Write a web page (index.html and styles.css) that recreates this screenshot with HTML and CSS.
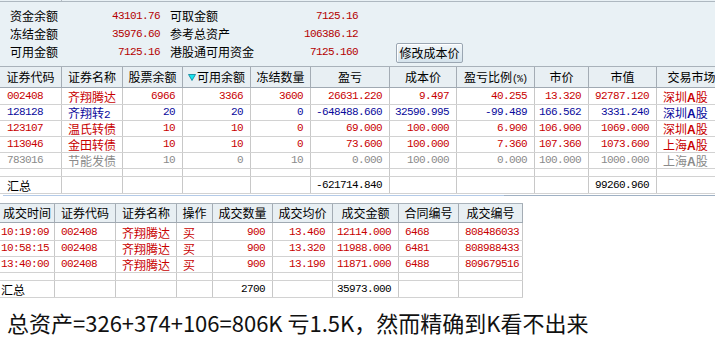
FILE: index.html
```html
<!DOCTYPE html>
<html lang="zh-CN">
<head>
<meta charset="utf-8">
<title>资金股份</title>
<link rel="stylesheet" href="styles.css">
</head>
<body>
<div class="app">
  <div class="topline"><span class="tick"></span></div>
  <div class="panel">
    <div class="pgrid">
      <span class="lbl">资金余额</span><span class="val">43101.76</span>
      <span class="lbl l2">可取金额</span><span class="val">7125.16</span>
      <span></span><span></span>
      <span class="lbl">冻结金额</span><span class="val">35976.60</span>
      <span class="lbl l2">参考总资产</span><span class="val">106386.12</span>
      <span></span><span></span>
      <span class="lbl">可用金额</span><span class="val">7125.16</span>
      <span class="lbl l2">港股通可用资金</span><span class="val">7125.160</span>
      <span></span><button class="btn" type="button">修改成本价</button>
    </div>
  </div>

  <div class="grid g1">
    <div class="row head">
      <div class="c">证券代码</div><div class="c">证券名称</div><div class="c">股票余额</div>
      <div class="c"><svg class="sort" width="8" height="7" viewBox="0 0 8 7"><polygon points="0.5,0.5 7.5,0.5 4,6.5" fill="#1ae6f0" stroke="#0a7f95" stroke-width="0.8"/></svg>可用余额</div>
      <div class="c">冻结数量</div><div class="c">盈亏</div><div class="c">成本价</div>
      <div class="c">盈亏比例<span class="pct">(%)</span></div><div class="c">市价</div><div class="c">市值</div><div class="c">交易市场</div>
    </div>
    <div class="row first red">
      <div class="c n l">002408</div><div class="c l">齐翔腾达</div><div class="c n r">6966</div><div class="c n r">3366</div><div class="c n r">3600</div><div class="c n r">26631.220</div><div class="c n r">9.497</div><div class="c n r">40.255</div><div class="c n r">13.320</div><div class="c n r">92787.120</div><div class="c l">深圳<b class="a">A</b>股</div>
    </div>
    <div class="row blue">
      <div class="c n l">128128</div><div class="c l">齐翔转<span class="n">2</span></div><div class="c n r">20</div><div class="c n r">20</div><div class="c n r">0</div><div class="c n r">-648488.660</div><div class="c n r">32590.995</div><div class="c n r">-99.489</div><div class="c n r">166.562</div><div class="c n r">3331.240</div><div class="c l">深圳<b class="a">A</b>股</div>
    </div>
    <div class="row red">
      <div class="c n l">123107</div><div class="c l">温氏转债</div><div class="c n r">10</div><div class="c n r">10</div><div class="c n r">0</div><div class="c n r">69.000</div><div class="c n r">100.000</div><div class="c n r">6.900</div><div class="c n r">106.900</div><div class="c n r">1069.000</div><div class="c l">深圳<b class="a">A</b>股</div>
    </div>
    <div class="row red">
      <div class="c n l">113046</div><div class="c l">金田转债</div><div class="c n r">10</div><div class="c n r">10</div><div class="c n r">0</div><div class="c n r">73.600</div><div class="c n r">100.000</div><div class="c n r">7.360</div><div class="c n r">107.360</div><div class="c n r">1073.600</div><div class="c l">上海<b class="a">A</b>股</div>
    </div>
    <div class="row gray">
      <div class="c n l">783016</div><div class="c l">节能发债</div><div class="c n r">10</div><div class="c n r">0</div><div class="c n r">10</div><div class="c n r">0.000</div><div class="c n r">100.000</div><div class="c n r">0.000</div><div class="c n r">100.000</div><div class="c n r">1000.000</div><div class="c l">上海<b class="a">A</b>股</div>
    </div>
    <div class="row empty">
      <div class="c"></div><div class="c"></div><div class="c"></div><div class="c"></div><div class="c"></div><div class="c"></div><div class="c"></div><div class="c"></div><div class="c"></div><div class="c"></div><div class="c"></div>
    </div>
    <div class="row sum">
      <div class="c l">汇总</div><div class="c"></div><div class="c"></div><div class="c"></div><div class="c"></div><div class="c n r">-621714.840</div><div class="c"></div><div class="c"></div><div class="c"></div><div class="c n r">99260.960</div><div class="c"></div>
    </div>
  </div>

  <div class="split"><span class="sp-a"></span><span class="sp-b"></span></div>

  <div class="grid g2">
    <div class="row head">
      <div class="c">成交时间</div><div class="c">证券代码</div><div class="c">证券名称</div><div class="c">操作</div><div class="c">成交数量</div><div class="c">成交均价</div><div class="c">成交金额</div><div class="c">合同编号</div><div class="c">成交编号</div>
    </div>
    <div class="row first red">
      <div class="c n t">10:19:09</div><div class="c n l">002408</div><div class="c l">齐翔腾达</div><div class="c l">买</div><div class="c n r">900</div><div class="c n r">13.460</div><div class="c n r">12114.000</div><div class="c n l">6468</div><div class="c n l">808486033</div>
    </div>
    <div class="row red">
      <div class="c n t">10:58:15</div><div class="c n l">002408</div><div class="c l">齐翔腾达</div><div class="c l">买</div><div class="c n r">900</div><div class="c n r">13.320</div><div class="c n r">11988.000</div><div class="c n l">6481</div><div class="c n l">808988433</div>
    </div>
    <div class="row red">
      <div class="c n t">13:40:00</div><div class="c n l">002408</div><div class="c l">齐翔腾达</div><div class="c l">买</div><div class="c n r">900</div><div class="c n r">13.190</div><div class="c n r">11871.000</div><div class="c n l">6488</div><div class="c n l">809679516</div>
    </div>
    <div class="row empty">
      <div class="c"></div><div class="c"></div><div class="c"></div><div class="c"></div><div class="c"></div><div class="c"></div><div class="c"></div><div class="c"></div><div class="c"></div>
    </div>
    <div class="row sum">
      <div class="c t">汇总</div><div class="c"></div><div class="c"></div><div class="c"></div><div class="c n r">2700</div><div class="c"></div><div class="c n r">35973.000</div><div class="c"></div><div class="c"></div>
    </div>
  </div>

  <p class="note">总资产=326+374+106=806K 亏1.5K，然而精确到K看不出来</p>
</div>
</body>
</html>
```
FILE: styles.css
```css
html, body {
  margin: 0;
  padding: 0;
  background: #ffffff;
}
body {
  width: 715px;
  height: 359px;
  overflow: hidden;
  font-family: "Noto Sans CJK SC", "Noto Sans", sans-serif;
  font-size: 12px;
  color: #000;
}
.app {
  width: 715px;
  overflow: hidden;
}

/* top strip */
.topline {
  height: 1px;
  background: #e9f1f5;
  display: flex;
}
.tick {
  width: 62px;
  box-sizing: border-box;
  border-right: 1px solid #b4bcc4;
}

/* account panel */
.panel {
  height: 65px;
  box-sizing: border-box;
  border-top: 1px solid #aeb8c0;
  background: #e9f1f5;
  padding: 5px 0 0 10px;
}
.pgrid {
  display: grid;
  grid-template-columns: 70px 80px 98px 100px 38px 67px;
  grid-auto-rows: 18px;
  align-items: center;
}
.lbl {
  line-height: 18px;
  white-space: nowrap;
}
.l2 {
  padding-left: 10px;
}
.val {
  text-align: right;
  font-family: "Liberation Mono", "DejaVu Sans Mono", monospace;
  font-size: 11px;
  letter-spacing: -0.6px;
  color: #b40000;
  line-height: 18px;
}
.btn {
  align-self: start;
  width: 67px;
  height: 20px;
  padding: 0;
  margin: 0;
  font-family: "Noto Sans CJK SC", sans-serif;
  font-size: 12px;
  line-height: 16px;
  color: #000;
  border: 1px solid #9aa6b2;
  border-radius: 2px;
  background: linear-gradient(#f2f7fa, #d5e3ec);
  box-shadow: inset 1px 1px 0 #ffffff;
}

/* grids */
.row {
  display: grid;
  box-sizing: border-box;
  height: 16px;
  border-bottom: 1px solid #d2d2d2;
}
.g1 .row {
  grid-template-columns: 62px 61px 60px 68px 60px 79px 67px 78px 54px 68px 70px;
  width: 727px;
}
.g2 .row {
  grid-template-columns: 55px 61px 61px 36px 60px 60px 66px 60px 64px;
  width: 523px;
}
.c {
  box-sizing: border-box;
  border-right: 1px solid #c8c8c8;
  white-space: nowrap;
  overflow: hidden;
  line-height: 15px;
}
.row.head {
  height: 22px;
  background: #e8eff3;
  border-top: 1px solid #a9b2ba;
  border-bottom: 1px solid #a0a9b2;
}
.row.head .c {
  text-align: center;
  line-height: 20px;
  border-right: 1px solid #a4acb4;
}
.g2 .row.head {
  height: 20px;
}
.g2 .row.head .c {
  line-height: 18px;
}
.row.first {
  height: 17px;
}
.row.first .c {
  line-height: 17px;
}
.g2 .row.first {
  height: 18px;
}
.g2 .row.first .c {
  line-height: 19px;
}
.row.empty {
  height: 8px;
}
.row.sum {
  height: 17px;
}
.row.sum .c {
  line-height: 17px;
}

.n {
  font-family: "Liberation Mono", "DejaVu Sans Mono", monospace;
  font-size: 11px;
  letter-spacing: -0.6px;
}
.l {
  padding-left: 6px;
}
.g1 .c:first-child.l {
  padding-left: 7px;
}
.t {
  padding-left: 1px;
}
.r {
  text-align: right;
  padding-right: 7px;
}
.red { color: #c80000; }
.blue { color: #0a0a9c; }
.gray { color: #8a8a8a; }
.a {
  font-family: "Liberation Sans", "DejaVu Sans", sans-serif;
  font-weight: bold;
  font-size: 12px;
}
.sort {
  vertical-align: 1px;
  margin-right: 1px;
}
.pct {
  font-family: "Liberation Mono", monospace;
  font-size: 10px;
  letter-spacing: -1px;
}

/* splitter between grids */
.split {
  display: flex;
  height: 1px;
  margin: 1px 0 7px;
}
.sp-a {
  width: 501px;
  background: #b4cbe8;
  margin-left: 3px;
}
.sp-b {
  flex: 1;
  background: #9fb1c4;
}

/* note */
.note {
  margin: 9px 0 0 7px;
  font-family: "Noto Sans CJK SC", "Noto Sans", sans-serif;
  font-size: 22px;
  line-height: 30px;
  color: #111;
  white-space: nowrap;
}
```
